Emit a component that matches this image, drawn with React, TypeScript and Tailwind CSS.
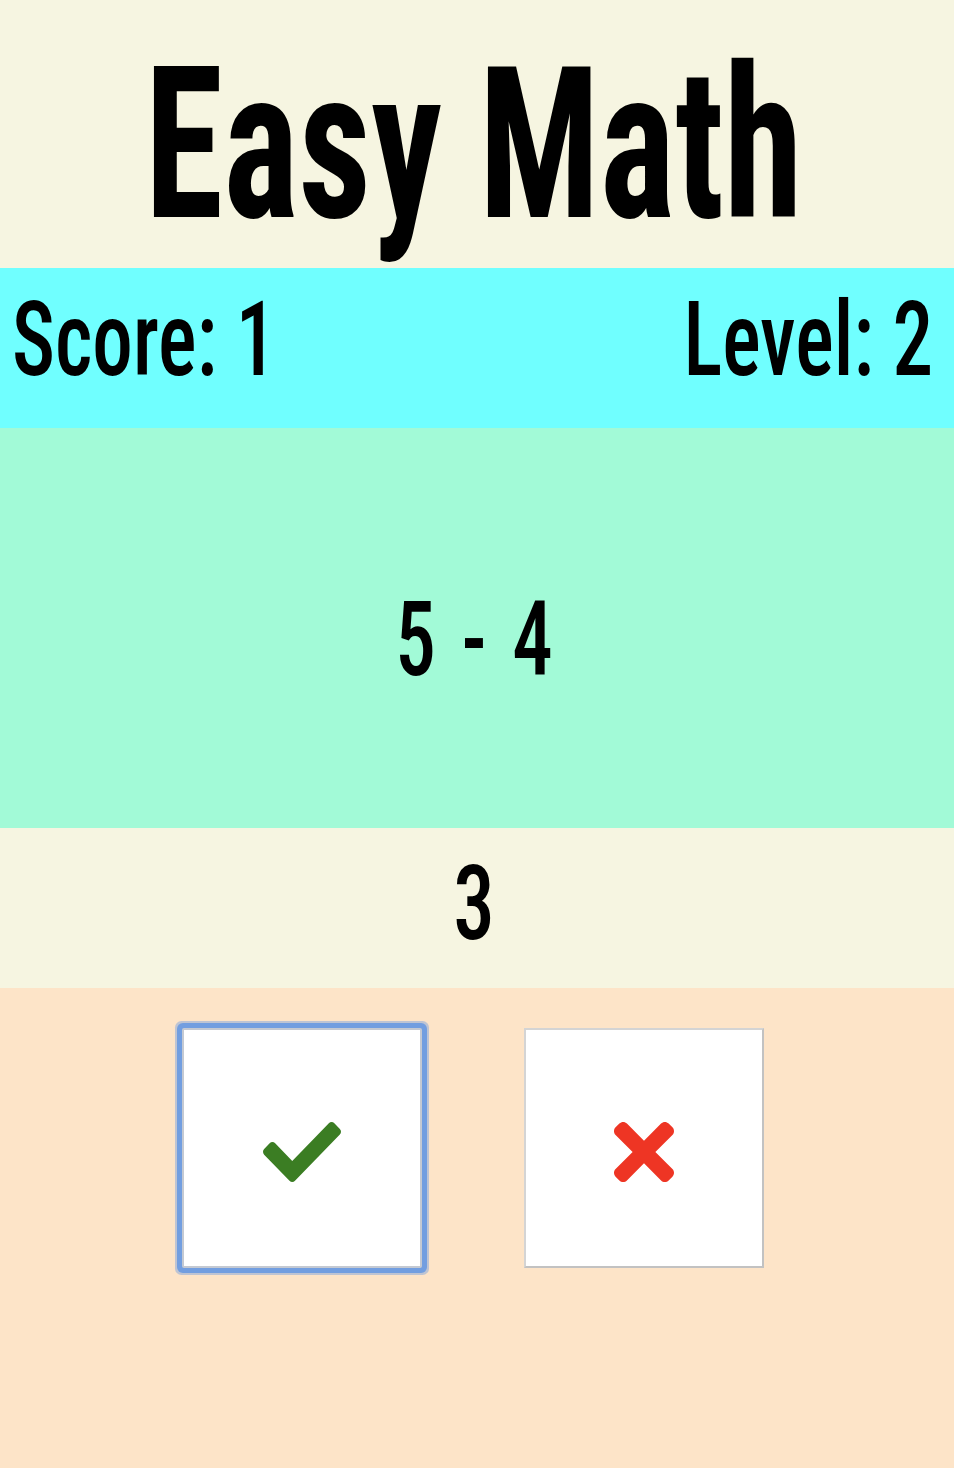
function CheckIcon() {
  return (
    <svg width="78" height="60" viewBox="0 65 512 382" preserveAspectRatio="none" aria-hidden="true">
      <path
        fill="#3b7d23"
        d="M173.898 439.404l-166.4-166.4c-9.997-9.997-9.997-26.206 0-36.204l36.203-36.204c9.997-9.998 26.207-9.998 36.204 0L192 312.69 432.095 72.596c9.997-9.997 26.207-9.997 36.204 0l36.203 36.204c9.997 9.997 9.997 26.206 0 36.204l-294.4 294.401c-9.998 9.997-26.207 9.997-36.204-.001z"
      />
    </svg>
  );
}

function TimesIcon() {
  return (
    <svg width="60" height="60" viewBox="0 80 352 352" aria-hidden="true">
      <path
        fill="#ee3524"
        d="M242.72 256l100.07-100.07c12.28-12.28 12.28-32.19 0-44.48l-22.24-22.24c-12.28-12.28-32.19-12.28-44.48 0L176 189.28 75.93 89.21c-12.28-12.28-32.19-12.28-44.48 0L9.21 111.45c-12.28 12.28-12.28 32.19 0 44.48L109.28 256 9.21 356.07c-12.28 12.28-12.28 32.19 0 44.48l22.24 22.24c12.28 12.28 32.2 12.28 44.48 0L176 322.72l100.07 100.07c12.28 12.28 32.2 12.28 44.48 0l22.24-22.24c12.28-12.28 12.28-32.19 0-44.48L242.72 256z"
      />
    </svg>
  );
}

export default function App() {
  return (
    <div className="w-[960px] min-h-[1468px] bg-white font-['Roboto_Condensed',Roboto,sans-serif] text-black">
      <div className="w-[954px] flex flex-col">
        <header className="h-[268px] bg-[#f6f5e1] flex justify-center items-start pt-[39px] pr-[6px] overflow-hidden">
          <h1 className="inline-block whitespace-nowrap text-[212px] leading-none font-bold scale-x-[0.753] origin-center">
            Easy Math
          </h1>
        </header>

        <section className="h-[160px] bg-[#70ffff] flex justify-between items-start pt-[20px] pl-[12px] pr-[21px]">
          <span className="inline-block whitespace-nowrap text-[104px] leading-none font-medium scale-x-[0.78] origin-left">
            Score: 1
          </span>
          <span className="inline-block whitespace-nowrap text-[104px] leading-none font-medium scale-x-[0.78] origin-right">
            Level: 2
          </span>
        </section>

        <section className="h-[400px] bg-[#a2fad7] flex justify-center items-start pt-[160px] pr-[6px]">
          <span className="inline-block whitespace-nowrap text-[104px] leading-none font-medium scale-x-[0.78] origin-center [word-spacing:9px]">
            5 - 4
          </span>
        </section>

        <section className="h-[160px] bg-[#f6f5e1] flex justify-center items-start pt-[24px] pr-[6px]">
          <span className="inline-block whitespace-nowrap text-[104px] leading-none font-medium scale-x-[0.8] origin-center">
            3
          </span>
        </section>

        <section className="h-[480px] bg-[#fde4c8] flex justify-center items-start gap-[102px] pt-[40px] pr-[8px]">
          <button
            type="button"
            aria-label="Correct"
            className="w-[240px] h-[240px] bg-white border-2 border-[#c4c9d2] rounded-[2px] flex items-center justify-center pt-[8px] shadow-[0_0_0_5px_#729ee0,0_0_0_7px_rgba(114,158,224,0.45)]"
          >
            <CheckIcon />
          </button>
          <button
            type="button"
            aria-label="Wrong"
            className="w-[240px] h-[240px] bg-white border-2 border-t-[#d4d4d4] border-l-[#d4d4d4] border-r-[#c2c2c2] border-b-[#c2c2c2] flex items-center justify-center pt-[8px]"
          >
            <TimesIcon />
          </button>
        </section>
      </div>
    </div>
  );
}
